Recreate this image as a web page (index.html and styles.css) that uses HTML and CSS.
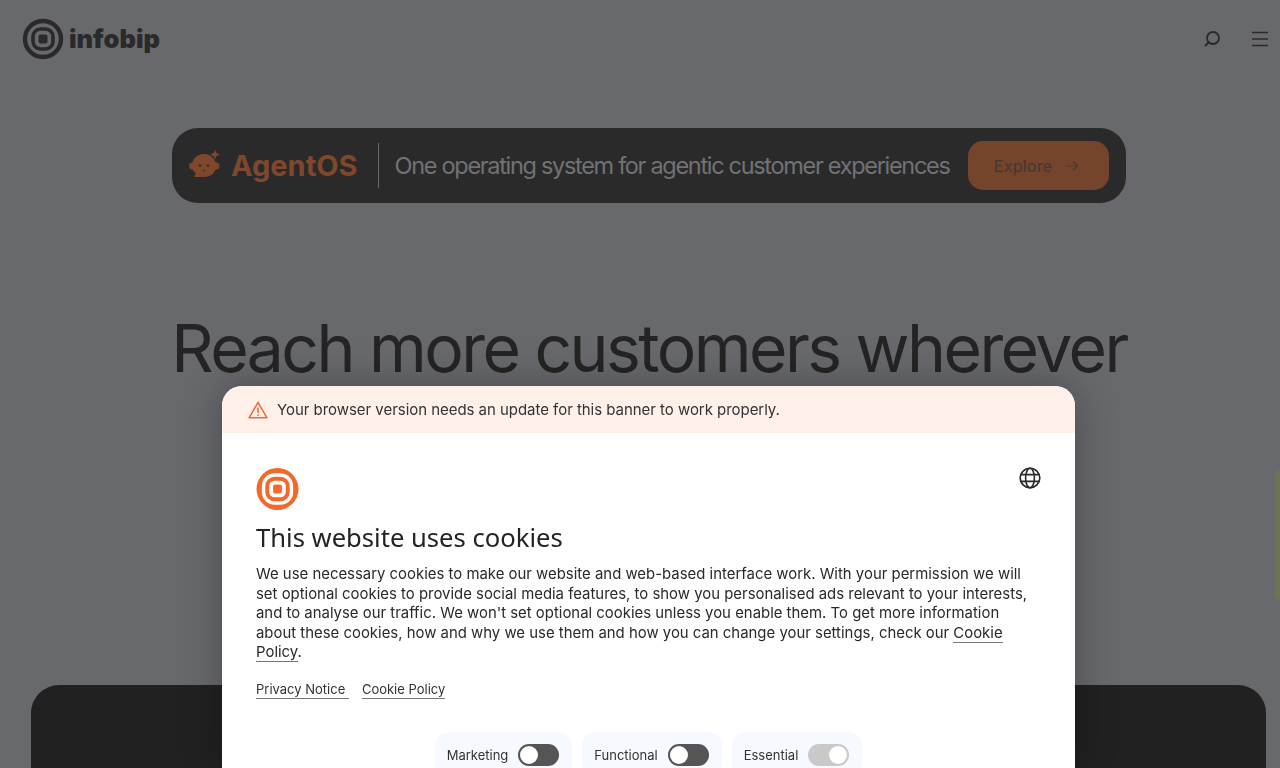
FILE: index.html
```html
<!DOCTYPE html>
<html>
<head>
    <title>Infobip</title>
    <meta name="viewport" content="width=device-width, initial-scale=1.0">
    <link rel="stylesheet" href="styles.css">
</head>
<body>
    <div class="page">
        <header class="site-header">
            <a class="logo">
                <svg class="logo-mark" width="42" height="42" viewBox="0 0 42 42">
                    <circle cx="21" cy="21" r="18" fill="none" stroke="#2a2a2c" stroke-width="4.4"/>
                    <rect x="11" y="11" width="20" height="20" rx="7.5" fill="none" stroke="#2a2a2c" stroke-width="3.6"/>
                    <rect x="16.5" y="16.5" width="9" height="9" rx="2" fill="#2a2a2c"/>
                </svg>
                <span class="logo-text">infobip</span>
            </a>
            <div class="header-icons">
                <svg width="20" height="20" viewBox="0 0 20 20" fill="none" stroke="#2a2a2c">
                    <circle cx="11" cy="9" r="6" stroke-width="1.8"/>
                    <path d="M6.5 13.5L3 17" stroke-width="2"/>
                </svg>
                <svg width="16" height="16" viewBox="0 0 16 16" stroke="#2a2a2c" stroke-width="1.5">
                    <path d="M0 1.5H16M0 8H16M0 14.5H16"/>
                </svg>
            </div>
        </header>

        <div class="promo">
            <svg class="promo-icon" width="34" height="30" viewBox="0 0 34 30">
                <circle cx="3.5" cy="15" r="3.5" fill="#7f482c"/>
                <circle cx="27" cy="15" r="3.5" fill="#7f482c"/>
                <path d="M15 3C22 3 27 8 27 15C27 22 22 26 15 26H5L7 22.5C4.5 20.5 3 18 3 15C3 8 8 3 15 3Z" fill="#7f482c"/>
                <circle cx="11" cy="14.5" r="1.3" fill="#3a2a22"/>
                <circle cx="19" cy="14.5" r="1.3" fill="#3a2a22"/>
                <path d="M13.5 19H16.5L15 20.5Z" fill="#3a2a22"/>
                <path d="M26 -1.5L27.4 2.1L31 3.5L27.4 4.9L26 8.5L24.6 4.9L21 3.5L24.6 2.1Z" fill="#7f482c"/>
            </svg>
            <span class="promo-name">AgentOS</span>
            <span class="promo-divider"></span>
            <span class="promo-text">One operating system for agentic customer experiences</span>
            <a class="promo-button">
                Explore
                <svg width="14" height="12" viewBox="0 0 14 12" fill="none" stroke="#4a3a32" stroke-width="1.2">
                    <path d="M1 6H12.5M8 1.5L12.5 6L8 10.5"/>
                </svg>
            </a>
        </div>

        <h1 class="hero-title">Reach more customers wherever</h1>

        <section class="dark-panel"></section>
    </div>

    <!-- green glow at the right edge -->
    <div class="glow"></div>

    <div class="cookie-modal">
        <div class="browser-warning">
            <svg width="20" height="18" viewBox="0 0 20 18" fill="none" stroke="#f06a35" stroke-width="1.5">
                <path d="M10 1.5L19 16.8H1Z" stroke-linejoin="round"/>
                <path d="M10 6.5V12M10 13.3V15"/>
            </svg>
            <span>Your browser version needs an update for this banner to work properly.</span>
        </div>
        <div class="cookie-body">
            <div class="cookie-top">
                <svg width="43" height="44" viewBox="0 0 44 44">
                    <circle cx="22" cy="22" r="21.5" fill="#f4692a"/>
                    <rect x="6" y="6" width="32" height="32" rx="13" fill="#fff"/>
                    <rect x="9.5" y="9.5" width="25" height="25" rx="9.5" fill="#f4692a"/>
                    <rect x="13.5" y="13.5" width="17" height="17" rx="5.5" fill="#fff"/>
                    <rect x="17.5" y="17.5" width="9" height="9" rx="2" fill="#f4692a"/>
                </svg>
                <svg class="globe" width="24" height="24" viewBox="0 0 24 24" fill="none" stroke="#2a2a2a" stroke-width="1.6">
                    <circle cx="12" cy="12" r="9.8"/>
                    <ellipse cx="12" cy="12" rx="4.4" ry="9.8"/>
                    <path d="M2.8 8.6H21.2M2.8 15.4H21.2"/>
                </svg>
            </div>
            <h2 class="cookie-title">This website uses cookies</h2>
            <p class="cookie-text">We use necessary cookies to make our website and web-based interface work. With your permission we will set optional cookies to provide social media features, to show you personalised ads relevant to your interests, and to analyse our traffic. We won't set optional cookies unless you enable them. To get more information about these cookies, how and why we use them and how you can change your settings, check our <a>Cookie Policy</a>.</p>
            <div class="cookie-links">
                <a>Privacy Notice&nbsp;</a>
                <a>Cookie Policy</a>
            </div>
            <div class="toggles">
                <div class="toggle-card">
                    <span>Marketing</span>
                    <span class="switch"></span>
                </div>
                <div class="toggle-card">
                    <span>Functional</span>
                    <span class="switch"></span>
                </div>
                <div class="toggle-card">
                    <span>Essential</span>
                    <span class="switch switch-on"></span>
                </div>
            </div>
        </div>
    </div>
</body>
</html>
```

FILE: styles.css
```css
body {
    margin: 0;
    height: 768px;
    overflow: hidden;
    background-color: #68696d;
    font-family: Inter, "Liberation Sans", sans-serif;
    color: #242425;
}

a {
    color: inherit;
}

/* the page underneath is wider than the window */
.page {
    width: 1298px;
    display: flex;
    flex-direction: column;
    align-items: center;
}

.site-header {
    width: 100%;
    box-sizing: border-box;
    height: 78px;
    padding: 0 30px 0 22px;
    display: flex;
    justify-content: space-between;
    align-items: center;
}

.logo {
    display: flex;
    align-items: center;
    gap: 5px;
}

.logo-text {
    font-size: 25.5px;
    font-weight: 900;
    color: #2a2a2c;
    margin-top: -2px;
}

.header-icons {
    display: flex;
    align-items: center;
    gap: 30px;
}

/* Promo strip */
.promo {
    margin-top: 50px;
    width: 954px;
    height: 75px;
    box-sizing: border-box;
    padding: 0 17px;
    background-color: #2a2a2b;
    border-radius: 26px;
    display: flex;
    align-items: center;
}

.promo-icon {
    overflow: visible;
}

.promo-name {
    margin-left: 8px;
    font-size: 29px;
    font-weight: 700;
    color: #7f482c;
}

.promo-divider {
    width: 1px;
    height: 45px;
    margin: 0 16px 0 20px;
    background-color: #68696d;
}

.promo-text {
    font-size: 23.5px;
    letter-spacing: -1.31px;
    color: #717275;
    white-space: nowrap;
}

.promo-button {
    margin-left: auto;
    width: 141px;
    height: 49px;
    box-sizing: border-box;
    padding-right: 4px;
    border-radius: 15px;
    background-color: #74442d;
    color: #463730;
    font-size: 16.5px;
    font-weight: 400;
    display: flex;
    justify-content: center;
    align-items: center;
    gap: 13px;
}

.hero-title {
    margin: 105px 0 0;
    font-size: 66px;
    line-height: 80px;
    font-weight: 400;
    letter-spacing: -2.55px;
    white-space: nowrap;
}

.dark-panel {
    margin: 297px 32px 0 31px;
    align-self: stretch;
    height: 83px;
    background-color: #212121;
    border-radius: 28px 28px 0 0;
}

.glow {
    position: absolute;
    top: 470px;
    left: 1275px;
    width: 5px;
    height: 130px;
    border-radius: 5px 0 0 5px;
    background-color: #6b7652;
    filter: blur(1px);
}

/* Cookie dialog */
.cookie-modal {
    position: fixed;
    top: 386px;
    left: 222px;
    width: 853px;
    height: 382px;
    background-color: #fff;
    border-radius: 20px 20px 0 0;
    overflow: hidden;
    box-shadow: 0 0 40px rgba(0, 0, 0, 0.3);
}

.browser-warning {
    height: 47px;
    padding-left: 26px;
    background-color: #fff1ea;
    display: flex;
    align-items: center;
    gap: 9px;
    font-size: 15px;
    letter-spacing: -0.04px;
    color: #333;
}

.cookie-body {
    padding: 34px 33px 0 34px;
}

.cookie-top {
    display: flex;
    justify-content: space-between;
    align-items: flex-start;
}

.globe {
    margin-top: -1px;
}

.cookie-title {
    margin: 10px 0 0;
    font-family: "Noto Sans", sans-serif;
    font-size: 25.6px;
    line-height: 34px;
    font-weight: 400;
    color: #242424;
}

.cookie-text {
    margin: 10px 0 0;
    font-size: 14.92px;
    line-height: 19.6px;
    color: #2a2a2a;
}

.cookie-text a,
.cookie-links a {
    text-decoration: none;
    border-bottom: 1.5px solid #777;
}

.cookie-links {
    margin-top: 18px;
    display: flex;
    gap: 13px;
    font-size: 13px;
    line-height: 17px;
    color: #333;
}

.toggles {
    margin-top: 33px;
    display: flex;
    justify-content: center;
    gap: 10px;
    margin-left: -1px;
}

.toggle-card {
    height: 46px;
    padding: 0 13px 0 12px;
    background-color: #f6f9ff;
    border-radius: 14px;
    display: flex;
    align-items: center;
    gap: 10px;
    font-size: 13px;
    color: #333;
}

.switch {
    position: relative;
    width: 41px;
    height: 22px;
    border-radius: 11px;
    background-color: #555;
}

.switch::after {
    content: '';
    position: absolute;
    top: 2px;
    left: 2px;
    width: 18px;
    height: 18px;
    border-radius: 50%;
    background-color: #fff;
}

.switch-on {
    background-color: #c9c9c9;
}

.switch-on::after {
    left: 21px;
}
```
